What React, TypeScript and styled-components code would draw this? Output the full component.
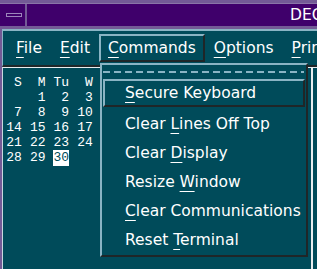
import React from 'react';
import styled, { createGlobalStyle } from 'styled-components';

const teal = '#004b5a';
const frame = '#735a96';
const titleBg = '#3f006b';
const bevelLight = '#8ab4c4';
const bevelDark = '#1f2628';

const GlobalStyle = createGlobalStyle`
  html, body {
    margin: 0;
    padding: 0;
    width: 317px;
    height: 269px;
    overflow: hidden;
    background: ${teal};
  }
`;

const Window = styled.div`
  position: relative;
  width: 317px;
  height: 269px;
  display: flex;
  flex-direction: column;
  background: ${frame};
  padding-left: 2px;
  box-sizing: border-box;
  overflow: hidden;
  font-family: 'DejaVu Sans', 'Liberation Sans', sans-serif;
`;

const TitleBar = styled.div`
  display: flex;
  height: 22px;
  margin: 3px 0 3px -2px;
  border-top: 1px solid #8a74a8;
  background: ${titleBg};
`;

const MenuButton = styled.div`
  width: 23px;
  margin-left: 2px;
  display: flex;
  align-items: center;
  justify-content: center;
  border-right: 2px solid ${frame};
`;

const MinimizeGlyph = styled.div`
  width: 14px;
  height: 2px;
  border: 1px solid #9c86bb;
`;

const Title = styled.div`
  flex: 1;
  color: #ffffff;
  font-size: 15.5px;
  line-height: 22px;
  padding-left: 263px;
  white-space: nowrap;
  overflow: hidden;
`;

const MenuBar = styled.div`
  display: flex;
  height: 28px;
  padding: 3px 0 3px 4px;
  box-sizing: content-box;
  background: ${teal};
  border-top: 2px solid ${bevelLight};
  border-left: 1px solid ${bevelLight};
  border-bottom: 2px solid ${bevelDark};
`;

const MenuTitle = styled.div<{ $open?: boolean }>`
  height: 28px;
  box-sizing: border-box;
  padding: 0 7px;
  line-height: 24px;
  font-size: 15.5px;
  color: #ffffff;
  white-space: nowrap;
  border: 2px solid transparent;
  ${({ $open }) =>
    $open &&
    `
    border-color: ${bevelLight} ${bevelDark} ${bevelDark} ${bevelLight};
  `}
`;

const Key = styled.span`
  text-decoration: underline;
  text-underline-offset: 4px;
  text-decoration-thickness: 1px;
`;

const Workspace = styled.div`
  flex: 1;
  display: flex;
  background: ${teal};
`;

const CalendarPanel = styled.div`
  width: 305px;
  border-top: 1px solid #e8eef0;
  border-left: 1px solid #c8d8de;
  padding: 7px 0 0 3px;
`;

const SidePanel = styled.div`
  flex: 1;
  border-top: 1px solid #e8eef0;
  border-left: 2px solid #e8eef0;
`;

const CalGrid = styled.div`
  display: grid;
  grid-template-columns: repeat(4, 23.7px);
  font-family: 'Liberation Mono', 'DejaVu Sans Mono', monospace;
  font-size: 13px;
  line-height: 15px;
  color: #ffffff;
`;

const Cell = styled.div<{ $today?: boolean }>`
  text-align: right;
  height: 15px;
  padding-right: 7.9px;
  span {
    display: inline-block;
    ${({ $today }) =>
      $today &&
      `
      background: #ffffff;
      color: ${teal};
      line-height: 16px;
      margin-top: -1px;
      width: 16px;
      text-align: center;
    `}
  }
`;

const Dropdown = styled.div`
  position: absolute;
  left: 100px;
  top: 63px;
  width: 208px;
  box-sizing: border-box;
  background: ${teal};
  border: 2px solid;
  border-color: ${bevelLight} ${bevelDark} ${bevelDark} ${bevelLight};
  padding-bottom: 1px;
`;

const TearOff = styled.div`
  height: 2px;
  margin: 6px 2px 6px 1px;
  background-image: linear-gradient(to right, ${bevelLight} 0 7px, transparent 7px 11px);
  background-size: 11px 2px;
`;

const Item = styled.div<{ $active?: boolean }>`
  font-size: 15.5px;
  color: #ffffff;
  white-space: nowrap;
  height: 29px;
  box-sizing: border-box;
  padding: 2px 0 0 23px;
  line-height: 27px;
  ${({ $active }) =>
    $active &&
    `
    height: 28px;
    margin: 0 1px 2px 1px;
    padding: 0 0 0 20px;
    line-height: 24px;
    border: 2px solid;
    border-color: ${bevelLight} ${bevelDark} ${bevelDark} ${bevelLight};
  `}
`;

const header = ['S', 'M', 'Tu', 'W'];
const weeks: (string | null)[][] = [
  [null, '1', '2', '3'],
  ['7', '8', '9', '10'],
  ['14', '15', '16', '17'],
  ['21', '22', '23', '24'],
  ['28', '29', '30', null],
];

const menus: [string, string][] = [
  ['F', 'ile'],
  ['E', 'dit'],
  ['C', 'ommands'],
  ['O', 'ptions'],
  ['P', 'rint'],
];

const items: [string, string, string][] = [
  ['', 'S', 'ecure Keyboard'],
  ['Clear ', 'L', 'ines Off Top'],
  ['Clear ', 'D', 'isplay'],
  ['Resize ', 'W', 'indow'],
  ['', 'C', 'lear Communications'],
  ['Reset ', 'T', 'erminal'],
];

export default function App() {
  return (
    <Window>
      <GlobalStyle />
      <TitleBar>
        <MenuButton>
          <MinimizeGlyph />
        </MenuButton>
        <Title>DECterm</Title>
      </TitleBar>
      <MenuBar>
        {menus.map(([k, rest]) => (
          <MenuTitle key={k} $open={k === 'C'}>
            <Key>{k}</Key>
            {rest}
          </MenuTitle>
        ))}
      </MenuBar>
      <Workspace>
        <CalendarPanel>
          <CalGrid>
            {header.map((h) => (
              <Cell key={h}>{h}</Cell>
            ))}
            {weeks.flat().map((d, i) => (
              <Cell key={i} $today={d === '30'}>
                {d && <span>{d}</span>}
              </Cell>
            ))}
          </CalGrid>
        </CalendarPanel>
        <SidePanel />
      </Workspace>
      <Dropdown>
        <TearOff />
        {items.map(([pre, k, rest], i) => (
          <Item key={i} $active={i === 0}>
            {pre}
            <Key>{k}</Key>
            {rest}
          </Item>
        ))}
      </Dropdown>
    </Window>
  );
}
